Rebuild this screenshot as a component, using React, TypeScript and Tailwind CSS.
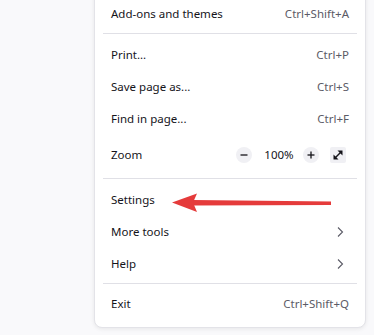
import { ReactNode } from "react";

const font = { fontFamily: '"Noto Sans", "Open Sans", sans-serif' };

function Row({ label, shortcut, children }: { label: string; shortcut?: string; children?: ReactNode }) {
  return (
    <div className="h-[32px] flex items-center justify-between px-2 rounded">
      <span className="text-[#15141a]">{label}</span>
      {shortcut && <span className="text-[#5b5b66]">{shortcut}</span>}
      {children}
    </div>
  );
}

function Separator({ last }: { last?: boolean }) {
  return <div className={last ? "h-px bg-[#e0e0e6] mt-[3px] mb-[4px]" : "h-px bg-[#e0e0e6] mt-[3px] mb-[5px]"} />;
}

function Chevron() {
  return (
    <svg width="16" height="16" viewBox="0 0 16 16" className="mr-[1px]">
      <path d="M6 3.5 L10.5 8 L6 12.5" fill="none" stroke="#5b5b66" strokeWidth="1.1" />
    </svg>
  );
}

function RoundButton({ sign }: { sign: "minus" | "plus" }) {
  return (
    <div className="w-[16px] h-[16px] rounded-full bg-[#f0f0f4] flex items-center justify-center">
      <svg width="10" height="10" viewBox="0 0 10 10">
        <path d="M1.5 5 H8.5" stroke="#15141a" strokeWidth="1.3" />
        {sign === "plus" && <path d="M5 1.5 V8.5" stroke="#15141a" strokeWidth="1.3" />}
      </svg>
    </div>
  );
}

export default function App() {
  return (
    <div className="w-[374px] h-[335px] bg-[#f9f9fb] overflow-hidden relative text-[11.5px]" style={font}>
      <div className="flex justify-end pr-[8px]">
        <div className="w-[272px] mt-[-11px] bg-white border border-[#e3e3e8] rounded-b-[8px] shadow-[0_1px_4px_rgba(0,0,0,0.08)] px-2 pt-2 pb-[7px]">
          <Row label="Add-ons and themes" shortcut="Ctrl+Shift+A" />
          <Separator />
          <Row label="Print..." shortcut="Ctrl+P" />
          <Row label="Save page as..." shortcut="Ctrl+S" />
          <Row label="Find in page..." shortcut="Ctrl+F" />
          <div className="h-[40px] flex items-center justify-between pl-2 pr-[11px]">
            <span className="text-[#15141a]">Zoom</span>
            <div className="flex items-center">
              <RoundButton sign="minus" />
              <span className="text-[#15141a] w-[34px] text-center ml-[10px] mr-[7px]">100%</span>
              <RoundButton sign="plus" />
              <div className="ml-[11px] w-[16px] h-[16px] bg-[#f0f0f4] rounded-[2px] flex items-center justify-center">
                <svg width="12" height="12" viewBox="0 0 12 12">
                  <path d="M3 9 L9 3" stroke="#15141a" strokeWidth="1.5" />
                  <path d="M5.5 1.5 H10.5 V6.5 Z" fill="#15141a" />
                  <path d="M1.5 5.5 V10.5 H6.5 Z" fill="#15141a" />
                </svg>
              </div>
            </div>
          </div>
          <Separator />
          <Row label="Settings" />
          <Row label="More tools">
            <Chevron />
          </Row>
          <Row label="Help">
            <Chevron />
          </Row>
          <Separator last />
          <Row label="Exit" shortcut="Ctrl+Shift+Q" />
        </div>
      </div>

      {/* red annotation arrow over the Settings row */}
      <svg className="absolute left-0 top-0 pointer-events-none" width="374" height="335" viewBox="0 0 374 335">
        <path d="M193 200 L331 201.5 L331 205 L193 205.5 Z" fill="#e53b3b" />
        <path d="M172 202.5 L197 193.5 L193 202.5 L197 212 Z" fill="#e53b3b" />
      </svg>
    </div>
  );
}
